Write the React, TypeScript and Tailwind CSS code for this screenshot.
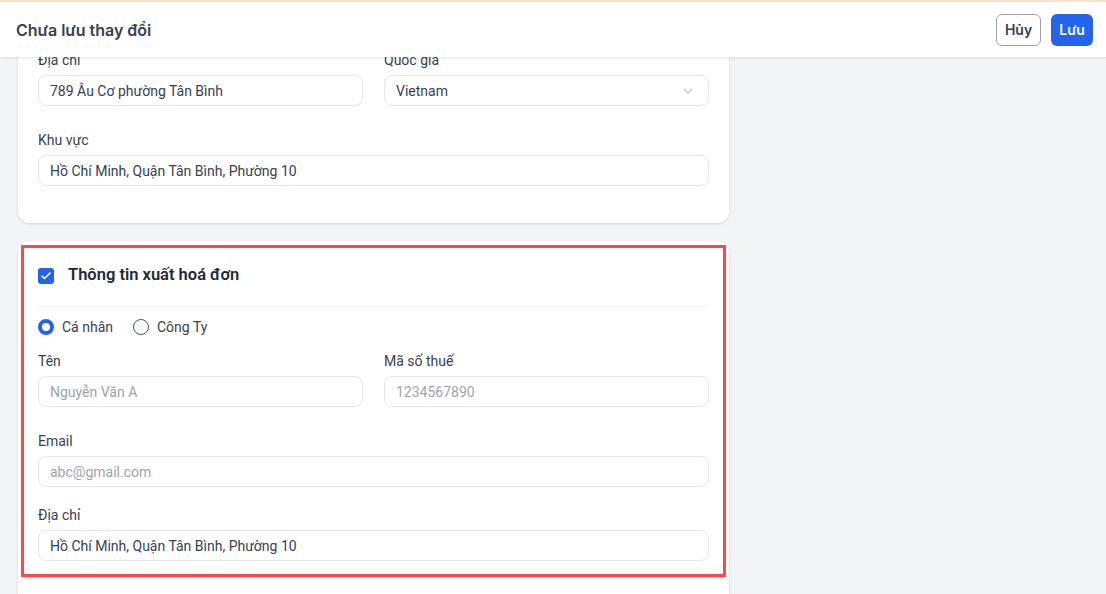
import { ChevronDown, Check } from "lucide-react";

const inter = { fontFamily: "Inter, 'Noto Sans', sans-serif" };
const body = { fontFamily: "Roboto, 'Noto Sans', sans-serif" };

function Field({
    label,
    value,
    placeholder,
    select,
}: {
    label: string;
    value?: string;
    placeholder?: string;
    select?: boolean;
}) {
    return (
        <div className="flex flex-col" style={body}>
            <label className="mb-[5px] text-sm leading-5 text-[#374151]">{label}</label>
            <div className="flex h-[31px] items-center justify-between rounded-lg border border-[#e5e7eb] bg-white pl-[11px] pr-3 text-sm">
                {value ? (
                    <span className="text-[#374151]">{value}</span>
                ) : (
                    <span className="text-[#9ca3af]">{placeholder}</span>
                )}
                {select && <ChevronDown className="h-4 w-4 text-[#c4c7cc]" strokeWidth={2} />}
            </div>
        </div>
    );
}

function Radio({ label, checked }: { label: string; checked?: boolean }) {
    return (
        <label className="flex items-center gap-2 text-sm text-[#374151]" style={body}>
            <span
                className={
                    checked
                        ? "h-4 w-4 rounded-full border-[4px] border-[#2563eb] bg-white"
                        : "h-4 w-4 rounded-full border-[1.5px] border-[#4b5563] bg-white"
                }
            />
            {label}
        </label>
    );
}

export default function App() {
    return (
        <div className="relative h-[594px] w-full overflow-hidden bg-[#f3f4f6]" style={inter}>
            {/* Unsaved changes bar — sits over the scrolled form */}
            <div className="absolute inset-x-0 top-0 z-10 flex h-[57px] items-center justify-between border-t-2 border-[#f5e2cc] bg-white pl-4 pr-[13px] shadow-[0_1px_3px_rgba(0,0,0,0.1)]">
                <h1 className="text-base font-semibold text-[#374151]">Chưa lưu thay đổi</h1>
                <div className="flex items-center gap-[10px]">
                    <button className="h-8 w-[45px] rounded-md border border-[#9ca3af] bg-white text-sm font-semibold text-[#374151]">
                        Hủy
                    </button>
                    <button className="h-8 w-[42px] rounded-md bg-[#2563eb] text-sm font-semibold text-white">
                        Lưu
                    </button>
                </div>
            </div>

            <div className="flex flex-col pl-[18px] pt-[30px]">
                {/* Address card */}
                <div className="w-[711px] rounded-xl bg-white px-5 pb-[37px] pt-5 shadow-[0_1px_3px_rgba(0,0,0,0.12)]">
                    <div className="grid grid-cols-2 gap-x-[21px]">
                        <Field label="Địa chỉ" value="789 Âu Cơ phường Tân Bình" />
                        <Field label="Quốc gia" value="Vietnam" select />
                    </div>
                    <div className="mt-6">
                        <Field label="Khu vực" value="Hồ Chí Minh, Quận Tân Bình, Phường 10" />
                    </div>
                </div>

                {/* Invoice card */}
                <div className="mt-[18px] w-[711px] rounded-xl bg-white px-[3px] pb-10 pt-1 shadow-[0_1px_3px_rgba(0,0,0,0.12)]">
                    <div className="border-[3px] border-[#ff4747] px-[14px] pb-[13px] pt-[15px]">
                        <div className="flex h-6 items-center gap-[14px]">
                            <span className="mt-px flex h-4 w-4 items-center justify-center rounded-[3px] bg-[#2563eb]">
                                <Check className="h-3 w-3 text-white" strokeWidth={3} />
                            </span>
                            <span className="text-[16.5px] font-semibold text-[#1f2937]" style={body}>
                                Thông tin xuất hoá đơn
                            </span>
                        </div>
                        <div className="mt-[19px] border-t border-[#eef0f2] pt-[10px]">
                            <div className="flex items-center gap-5">
                                <Radio label="Cá nhân" checked />
                                <Radio label="Công Ty" />
                            </div>
                        </div>
                        <div className="mt-[14px] grid grid-cols-2 gap-x-[21px]">
                            <Field label="Tên" placeholder="Nguyễn Văn A" />
                            <Field label="Mã số thuế" placeholder="1234567890" />
                        </div>
                        <div className="mt-6">
                            <Field label="Email" placeholder="abc@gmail.com" />
                        </div>
                        <div className="mt-[18px]">
                            <Field label="Địa chỉ" value="Hồ Chí Minh, Quận Tân Bình, Phường 10" />
                        </div>
                    </div>
                </div>
            </div>
        </div>
    );
}
